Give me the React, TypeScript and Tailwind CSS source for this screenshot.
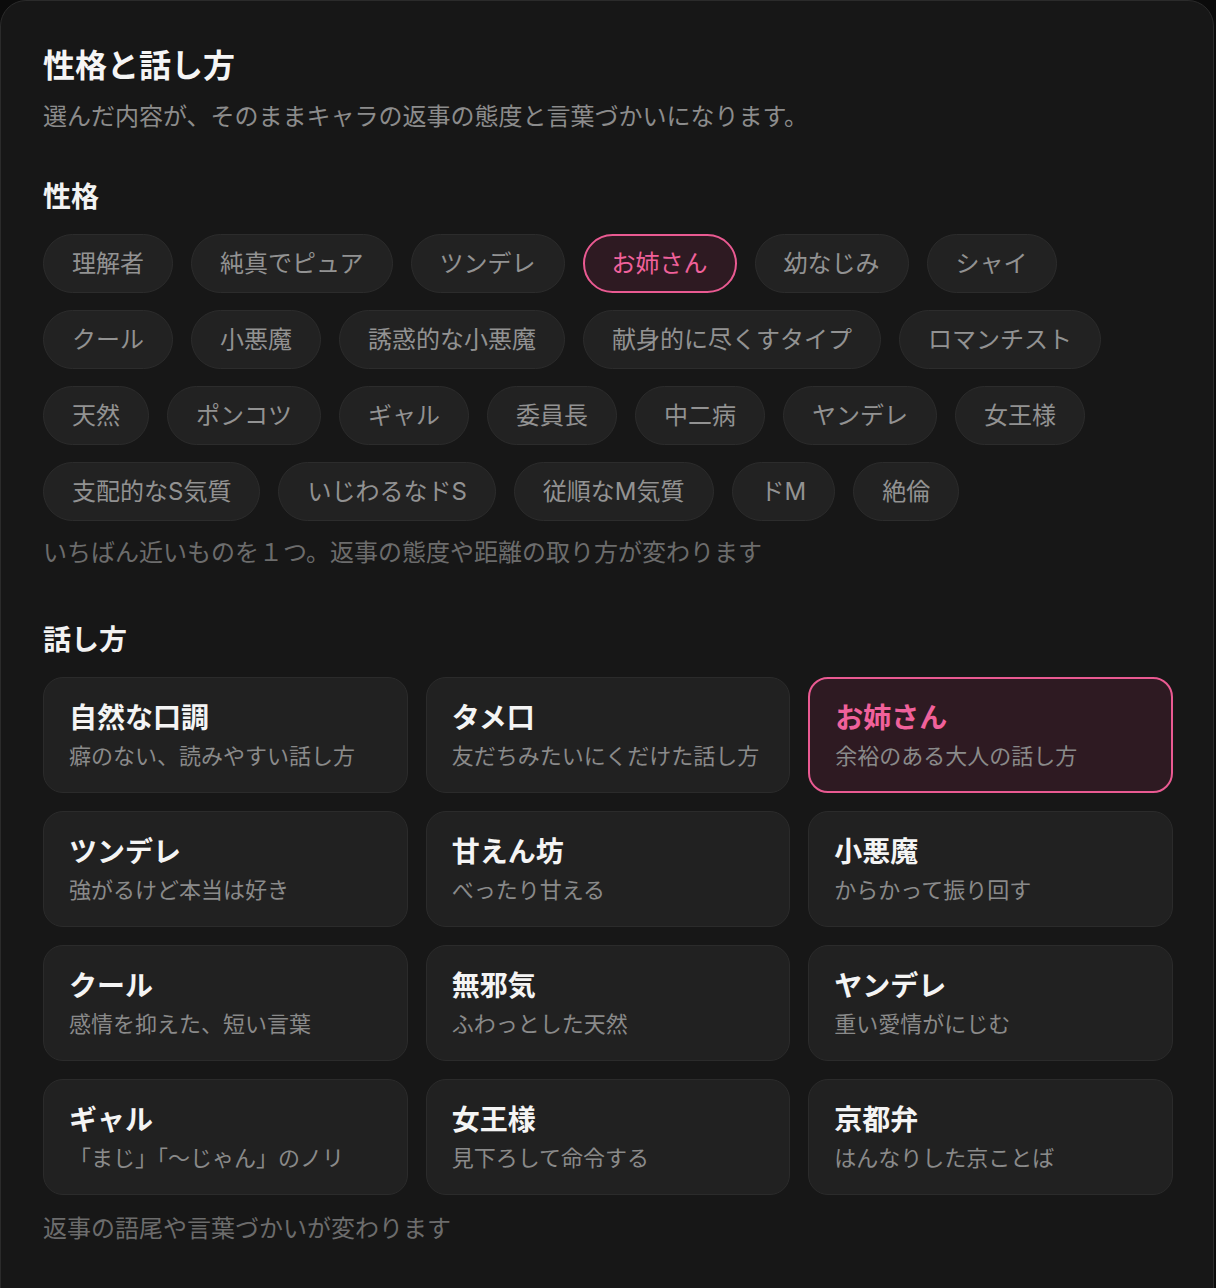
const personalities: string[][] = [
  ['理解者', '純真でピュア', 'ツンデレ', 'お姉さん', '幼なじみ', 'シャイ'],
  ['クール', '小悪魔', '誘惑的な小悪魔', '献身的に尽くすタイプ', 'ロマンチスト'],
  ['天然', 'ポンコツ', 'ギャル', '委員長', '中二病', 'ヤンデレ', '女王様'],
  ['支配的なS気質', 'いじわるなドS', '従順なM気質', 'ドM', '絶倫'],
]

const styles = [
  { title: '自然な口調', desc: '癖のない、読みやすい話し方' },
  { title: 'タメ口', desc: '友だちみたいにくだけた話し方' },
  { title: 'お姉さん', desc: '余裕のある大人の話し方' },
  { title: 'ツンデレ', desc: '強がるけど本当は好き' },
  { title: '甘えん坊', desc: 'べったり甘える' },
  { title: '小悪魔', desc: 'からかって振り回す' },
  { title: 'クール', desc: '感情を抑えた、短い言葉' },
  { title: '無邪気', desc: 'ふわっとした天然' },
  { title: 'ヤンデレ', desc: '重い愛情がにじむ' },
  { title: 'ギャル', desc: '「まじ」「〜じゃん」のノリ' },
  { title: '女王様', desc: '見下ろして命令する' },
  { title: '京都弁', desc: 'はんなりした京ことば' },
]

function Chip({ label, active }: { label: string; active?: boolean }) {
  return (
    <button
      className={
        active
          ? 'h-[59px] px-[27px] rounded-full border-2 border-[#ea5a92] bg-[#2e1a22] text-[#f0619b] text-[24px] leading-none flex items-center'
          : 'h-[59px] px-[28px] rounded-full border border-[#2c2c2c] bg-[#222222] text-[#929292] text-[24px] leading-none flex items-center'
      }
    >
      {label}
    </button>
  )
}

function StyleCard({ title, desc, active }: { title: string; desc: string; active?: boolean }) {
  return (
    <div
      className={
        active
          ? 'h-[116px] rounded-[20px] border-2 border-[#ea5a92] bg-[#2e1a22] px-[25px] pt-[21px] flex flex-col gap-[5px]'
          : 'h-[116px] rounded-[20px] border border-[#2b2b2b] bg-[#212121] px-[25px] pt-[22px] flex flex-col gap-[5px]'
      }
    >
      <p className={active ? 'text-[28px] leading-[36px] font-bold text-[#f0619b]' : 'text-[28px] leading-[36px] font-bold text-[#f4f4f4]'}>
        {title}
      </p>
      <p className="text-[22px] leading-[30px] text-[#8a8a8a]">{desc}</p>
    </div>
  )
}

export default function App() {
  return (
    <div
      className="min-h-[1288px] bg-[#0b0b0b]"
      style={{ fontFamily: 'Inter, "Noto Sans CJK JP", sans-serif' }}
    >
      <div className="w-[1214px] rounded-t-[26px] border border-[#2b2b2b] bg-[#171717] pl-[42px] pr-[40px] pt-[45px] pb-[60px]">
        <h1 className="text-[32px] leading-[40px] font-bold text-[#f5f5f5]">性格と話し方</h1>
        <p className="mt-[15px] text-[24px] leading-[32px] text-[#8c8c8c]">
          選んだ内容が、そのままキャラの返事の態度と言葉づかいになります。
        </p>

        {/* 性格 */}
        <h2 className="mt-[46px] text-[28px] leading-[36px] font-semibold text-[#f2f2f2]">性格</h2>
        <div className="mt-[19px] flex flex-col gap-[17px]">
          {personalities.map((row, i) => (
            <div key={i} className="flex gap-[18px]">
              {row.map(p => (
                <Chip key={p} label={p} active={i === 0 && p === 'お姉さん'} />
              ))}
            </div>
          ))}
        </div>
        <p className="mt-[16px] text-[24px] leading-[32px] text-[#6c6c6c]">
          いちばん近いものを１つ。返事の態度や距離の取り方が変わります
        </p>

        {/* 話し方 */}
        <h2 className="mt-[53px] text-[28px] leading-[36px] font-semibold text-[#f2f2f2]">話し方</h2>
        <div className="mt-[19px] grid grid-cols-3 gap-x-[18px] gap-y-[18px]">
          {styles.map((s, i) => (
            <StyleCard key={s.title + i} title={s.title} desc={s.desc} active={i === 2} />
          ))}
        </div>
        <p className="mt-[18px] text-[24px] leading-[32px] text-[#6c6c6c]">返事の語尾や言葉づかいが変わります</p>
      </div>
    </div>
  )
}
